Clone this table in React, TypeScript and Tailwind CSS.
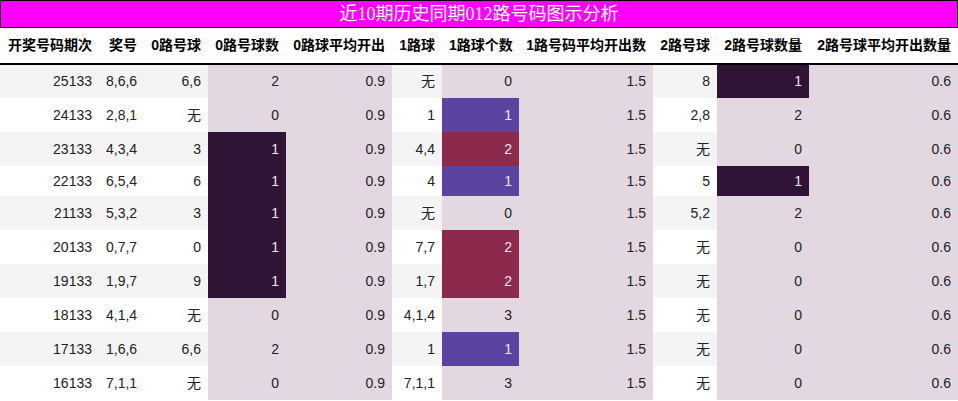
type Row = {
  qi: string;
  jh: string;
  r0: string;
  n0: number;
  r1: string;
  n1: number;
  r2: string;
  n2: number;
};

const rows: Row[] = [
  { qi: "25133", jh: "8,6,6", r0: "6,6", n0: 2, r1: "无", n1: 0, r2: "8", n2: 1 },
  { qi: "24133", jh: "2,8,1", r0: "无", n0: 0, r1: "1", n1: 1, r2: "2,8", n2: 2 },
  { qi: "23133", jh: "4,3,4", r0: "3", n0: 1, r1: "4,4", n1: 2, r2: "无", n2: 0 },
  { qi: "22133", jh: "6,5,4", r0: "6", n0: 1, r1: "4", n1: 1, r2: "5", n2: 1 },
  { qi: "21133", jh: "5,3,2", r0: "3", n0: 1, r1: "无", n1: 0, r2: "5,2", n2: 2 },
  { qi: "20133", jh: "0,7,7", r0: "0", n0: 1, r1: "7,7", n1: 2, r2: "无", n2: 0 },
  { qi: "19133", jh: "1,9,7", r0: "9", n0: 1, r1: "1,7", n1: 2, r2: "无", n2: 0 },
  { qi: "18133", jh: "4,1,4", r0: "无", n0: 0, r1: "4,1,4", n1: 3, r2: "无", n2: 0 },
  { qi: "17133", jh: "1,6,6", r0: "6,6", n0: 2, r1: "1", n1: 1, r2: "无", n2: 0 },
  { qi: "16133", jh: "7,1,1", r0: "无", n0: 0, r1: "7,1,1", n1: 3, r2: "无", n2: 0 },
];

const headers = [
  "开奖号码期次",
  "奖号",
  "0路号球",
  "0路号球数",
  "0路球平均开出",
  "1路球",
  "1路球个数",
  "1路号码平均开出数",
  "2路号球",
  "2路号球数量",
  "2路号球平均开出数量",
];

const widths = [99, 45, 64, 78, 106, 50, 77, 134, 64, 92, 149];

const shade = "bg-[#e3d8e2]";

// 0路 / 2路 count cells: 1 is dark
function darkCell(n: number) {
  return n === 1 ? "bg-[#2f1436] text-[#ece4ee]" : `${shade} text-[#222]`;
}

// 1路 count cells: 1 purple, 2 crimson
function oneCell(n: number) {
  if (n === 1) return "bg-[#5c43a1] text-[#ece4ee]";
  if (n === 2) return "bg-[#8b2a4c] text-[#ece4ee]";
  return `${shade} text-[#222]`;
}

export default function App() {
  return (
    <div className="w-[958px] h-[401px] overflow-hidden bg-white font-['Liberation_Sans','Noto_Sans_CJK_SC',sans-serif] text-[14px] text-[#222]">
      <div className="h-[28px] bg-[#ff00ff] border border-black flex items-center justify-center text-white text-[18px] font-['Liberation_Serif','Noto_Sans_CJK_SC',serif] leading-none">
        近10期历史同期012路号码图示分析
      </div>
      <table className="table-fixed border-collapse w-[958px]">
        <colgroup>
          {widths.map((w, i) => (
            <col key={i} style={{ width: w }} />
          ))}
        </colgroup>
        <thead>
          <tr className="h-[36px] border-b-2 border-black">
            {headers.map((h) => (
              <th key={h} className="px-[7px] text-right font-bold text-black whitespace-nowrap">
                {h}
              </th>
            ))}
          </tr>
        </thead>
        <tbody>
          {rows.map((r, i) => {
            const base = i % 2 === 0 ? "bg-[#f4f4f4]" : "bg-white";
            const h = i === 3 ? "h-[30px]" : "h-[34px]";
            return (
              <tr key={r.qi} className={`${h} ${base}`}>
                <td className="px-[7px] text-right">{r.qi}</td>
                <td className="px-[7px] text-right">{r.jh}</td>
                <td className="px-[7px] text-right">{r.r0}</td>
                <td className={`px-[7px] text-right ${darkCell(r.n0)}`}>{r.n0}</td>
                <td className={`px-[7px] text-right ${shade}`}>0.9</td>
                <td className="px-[7px] text-right">{r.r1}</td>
                <td className={`px-[7px] text-right ${oneCell(r.n1)}`}>{r.n1}</td>
                <td className={`px-[7px] text-right ${shade}`}>1.5</td>
                <td className="px-[7px] text-right">{r.r2}</td>
                <td className={`px-[7px] text-right ${darkCell(r.n2)}`}>{r.n2}</td>
                <td className={`px-[7px] text-right ${shade}`}>0.6</td>
              </tr>
            );
          })}
        </tbody>
      </table>
    </div>
  );
}
